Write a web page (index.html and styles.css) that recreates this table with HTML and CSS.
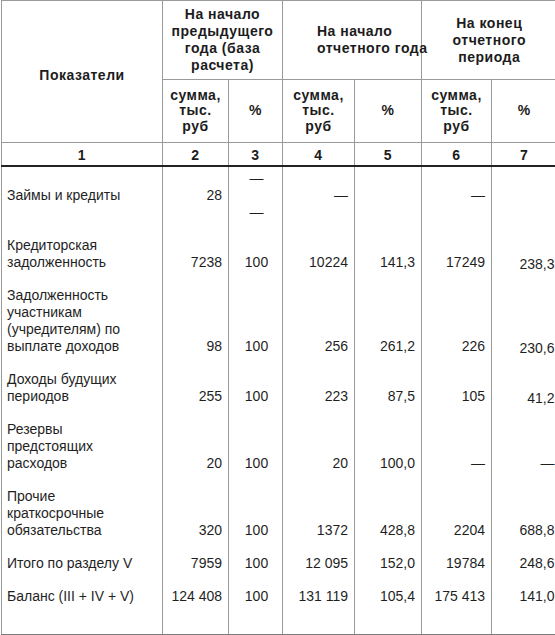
FILE: index.html
```html
<!DOCTYPE html>
<html lang="ru">
<head>
<meta charset="utf-8">
<title>Показатели</title>
<link rel="stylesheet" href="styles.css">
</head>
<body>
<table class="tbl">
  <colgroup>
    <col class="c1"><col class="c2"><col class="c3"><col class="c4"><col class="c5"><col class="c6"><col class="c7">
  </colgroup>
  <thead>
    <tr class="h-group">
      <th rowspan="2" class="h-main">Показатели</th>
      <th colspan="2">На начало<br>предыдущего<br>года (база<br>расчета)</th>
      <th colspan="2" class="h-left">На начало<br>отчетного года</th>
      <th colspan="2" class="h-last">На конец<br>отчетного<br>периода</th>
    </tr>
    <tr class="h-sub">
      <th>сумма,<br>тыс.<br>руб</th>
      <th>%</th>
      <th>сумма,<br>тыс.<br>руб</th>
      <th>%</th>
      <th>сумма,<br>тыс.<br>руб</th>
      <th class="h-last">%</th>
    </tr>
    <tr class="h-num">
      <th>1</th><th>2</th><th>3</th><th>4</th><th>5</th><th>6</th><th class="h-last">7</th>
    </tr>
  </thead>
  <tbody>
    <tr class="r-first">
      <td class="name">Займы и кредиты</td>
      <td class="num">28</td>
      <td class="pct">—<br><br>—</td>
      <td class="num">—</td>
      <td class="num"></td>
      <td class="num">—</td>
      <td class="num last"></td>
    </tr>
    <tr>
      <td class="name">Кредиторская<br>задолженность</td>
      <td class="num">7238</td>
      <td class="pct">100</td>
      <td class="num">10224</td>
      <td class="num">141,3</td>
      <td class="num">17249</td>
      <td class="num last"><span class="low">238,3</span></td>
    </tr>
    <tr>
      <td class="name">Задолженность<br>участникам<br>(учредителям) по<br>выплате доходов</td>
      <td class="num">98</td>
      <td class="pct">100</td>
      <td class="num">256</td>
      <td class="num">261,2</td>
      <td class="num">226</td>
      <td class="num last"><span class="low">230,6</span></td>
    </tr>
    <tr>
      <td class="name">Доходы будущих<br>периодов</td>
      <td class="num">255</td>
      <td class="pct">100</td>
      <td class="num">223</td>
      <td class="num">87,5</td>
      <td class="num">105</td>
      <td class="num last"><span class="low">41,2</span></td>
    </tr>
    <tr>
      <td class="name">Резервы<br>предстоящих<br>расходов</td>
      <td class="num">20</td>
      <td class="pct">100</td>
      <td class="num">20</td>
      <td class="num">100,0</td>
      <td class="num">—</td>
      <td class="num last">—</td>
    </tr>
    <tr>
      <td class="name">Прочие<br>краткосрочные<br>обязательства</td>
      <td class="num">320</td>
      <td class="pct">100</td>
      <td class="num">1372</td>
      <td class="num">428,8</td>
      <td class="num">2204</td>
      <td class="num last">688,8</td>
    </tr>
    <tr>
      <td class="name">Итого по разделу V</td>
      <td class="num">7959</td>
      <td class="pct">100</td>
      <td class="num">12 095</td>
      <td class="num">152,0</td>
      <td class="num">19784</td>
      <td class="num last">248,6</td>
    </tr>
    <tr class="r-last">
      <td class="name">Баланс (III + IV + V)</td>
      <td class="num">124 408</td>
      <td class="pct">100</td>
      <td class="num">131 119</td>
      <td class="num">105,4</td>
      <td class="num">175 413</td>
      <td class="num last">141,0</td>
    </tr>
  </tbody>
</table>
</body>
</html>
```
FILE: styles.css
```css
html, body {
  margin: 0;
  padding: 0;
  background: #ffffff;
  overflow: hidden;
}

body {
  padding-left: 1px;
  font-family: "Liberation Sans", Arial, sans-serif;
  font-size: 14px;
  line-height: 17px;
  color: #1f1f1f;
}

.tbl {
  border-collapse: collapse;
  table-layout: fixed;
  width: 555px;
  border-top: 1px solid #9a9a9a;
  border-left: 1px solid #9a9a9a;
  border-bottom: 2px solid #7c7c7c;
}

.c1 { width: 161px; }
.c2 { width: 66px; }
.c3 { width: 54px; }
.c4 { width: 72px; }
.c5 { width: 67px; }
.c6 { width: 70px; }
.c7 { width: 65px; }

th {
  font-weight: bold;
  letter-spacing: 0.5px;
  text-align: center;
  vertical-align: middle;
  padding: 0;
  border: 1px solid #9a9a9a;
  color: #1c1c1c;
}

th.h-last {
  border-right: none;
}

.h-group th {
  height: 78px;
  line-height: 17px;
}

.h-group th.h-main {
  padding-top: 8px;
}

.h-group th.h-left {
  text-align: left;
  padding-left: 34px;
  white-space: nowrap;
}

.h-sub th {
  height: 62px;
  line-height: 15.5px;
}

.h-num th {
  height: 20px;
  line-height: 17px;
  border-bottom: 2px solid #222222;
  padding-top: 2px;
}

td {
  vertical-align: bottom;
  padding: 8px 6px 8px 0;
  border-left: 1px solid #9a9a9a;
  border-right: 1px solid #9a9a9a;
  white-space: nowrap;
}

td.name {
  text-align: left;
  padding-left: 5px;
}

td.num {
  text-align: right;
}

td.pct {
  text-align: center;
  padding-right: 0;
  padding-left: 2px;
}

td.last {
  border-right: none;
  padding-right: 2px;
}

.low {
  position: relative;
  top: 2px;
}

.r-first td {
  vertical-align: middle;
  padding-top: 3px;
}

.r-last td {
  padding-bottom: 29px;
}
```
